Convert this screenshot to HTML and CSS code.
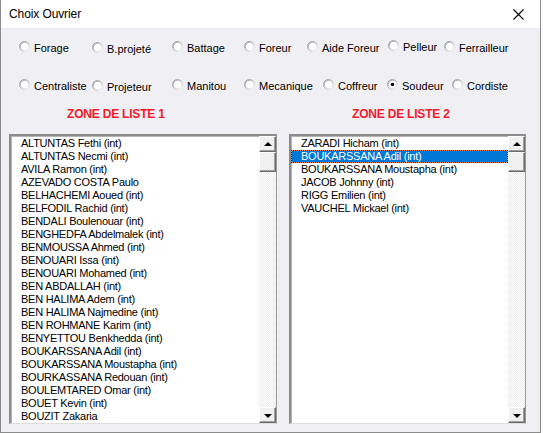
FILE: index.html
```html
<!DOCTYPE html>
<html lang="fr">
<head>
<meta charset="utf-8">
<title>Choix Ouvrier</title>
<link rel="stylesheet" href="styles.css">
</head>
<body>
<svg class="defs" width="0" height="0" aria-hidden="true">
  <defs>
    <linearGradient id="rgo" x1="0" y1="0" x2="1" y2="1">
      <stop offset="0" stop-color="#8e8e8e"/>
      <stop offset="0.5" stop-color="#b4b4b4"/>
      <stop offset="1" stop-color="#ffffff"/>
    </linearGradient>
    <linearGradient id="rgi" x1="0" y1="0" x2="1" y2="1">
      <stop offset="0" stop-color="#6a6a6a"/>
      <stop offset="0.55" stop-color="#d0d0d0"/>
      <stop offset="1" stop-color="#eeeeee"/>
    </linearGradient>
  </defs>
</svg>
<div class="window">
  <div class="titlebar">
    <span class="title">Choix Ouvrier</span>
    <span class="close"><svg width="11" height="11" viewBox="0 0 11 11"><path d="M0.5 0.5 L10.5 10.5 M10.5 0.5 L0.5 10.5" stroke="#000" stroke-width="1.1" fill="none"/></svg></span>
  </div>
  <div class="body">
    <div class="radio-row">
      <label class="radio w73"><svg class="rb" viewBox="0 0 12 12"><circle cx="6" cy="6" r="5.5" fill="#fff" stroke="url(#rgo)"/><circle cx="6" cy="6" r="4.5" fill="#fff" stroke="url(#rgi)" stroke-width="0.8"/></svg>Forage</label>
      <label class="radio w80 low"><svg class="rb" viewBox="0 0 12 12"><circle cx="6" cy="6" r="5.5" fill="#fff" stroke="url(#rgo)"/><circle cx="6" cy="6" r="4.5" fill="#fff" stroke="url(#rgi)" stroke-width="0.8"/></svg>B.projeté</label>
      <label class="radio w72"><svg class="rb" viewBox="0 0 12 12"><circle cx="6" cy="6" r="5.5" fill="#fff" stroke="url(#rgo)"/><circle cx="6" cy="6" r="4.5" fill="#fff" stroke="url(#rgi)" stroke-width="0.8"/></svg>Battage</label>
      <label class="radio w63"><svg class="rb" viewBox="0 0 12 12"><circle cx="6" cy="6" r="5.5" fill="#fff" stroke="url(#rgo)"/><circle cx="6" cy="6" r="4.5" fill="#fff" stroke="url(#rgi)" stroke-width="0.8"/></svg>Foreur</label>
      <label class="radio w81"><svg class="rb" viewBox="0 0 12 12"><circle cx="6" cy="6" r="5.5" fill="#fff" stroke="url(#rgo)"/><circle cx="6" cy="6" r="4.5" fill="#fff" stroke="url(#rgi)" stroke-width="0.8"/></svg>Aide Foreur</label>
      <label class="radio w56 high"><svg class="rb" viewBox="0 0 12 12"><circle cx="6" cy="6" r="5.5" fill="#fff" stroke="url(#rgo)"/><circle cx="6" cy="6" r="4.5" fill="#fff" stroke="url(#rgi)" stroke-width="0.8"/></svg>Pelleur</label>
      <label class="radio"><svg class="rb" viewBox="0 0 12 12"><circle cx="6" cy="6" r="5.5" fill="#fff" stroke="url(#rgo)"/><circle cx="6" cy="6" r="4.5" fill="#fff" stroke="url(#rgi)" stroke-width="0.8"/></svg>Ferrailleur</label>
    </div>
    <div class="radio-row row2">
      <label class="radio w73"><svg class="rb" viewBox="0 0 12 12"><circle cx="6" cy="6" r="5.5" fill="#fff" stroke="url(#rgo)"/><circle cx="6" cy="6" r="4.5" fill="#fff" stroke="url(#rgi)" stroke-width="0.8"/></svg>Centraliste</label>
      <label class="radio w80 low"><svg class="rb" viewBox="0 0 12 12"><circle cx="6" cy="6" r="5.5" fill="#fff" stroke="url(#rgo)"/><circle cx="6" cy="6" r="4.5" fill="#fff" stroke="url(#rgi)" stroke-width="0.8"/></svg>Projeteur</label>
      <label class="radio w72"><svg class="rb" viewBox="0 0 12 12"><circle cx="6" cy="6" r="5.5" fill="#fff" stroke="url(#rgo)"/><circle cx="6" cy="6" r="4.5" fill="#fff" stroke="url(#rgi)" stroke-width="0.8"/></svg>Manitou</label>
      <label class="radio w79"><svg class="rb" viewBox="0 0 12 12"><circle cx="6" cy="6" r="5.5" fill="#fff" stroke="url(#rgo)"/><circle cx="6" cy="6" r="4.5" fill="#fff" stroke="url(#rgi)" stroke-width="0.8"/></svg>Mecanique</label>
      <label class="radio w64"><svg class="rb" viewBox="0 0 12 12"><circle cx="6" cy="6" r="5.5" fill="#fff" stroke="url(#rgo)"/><circle cx="6" cy="6" r="4.5" fill="#fff" stroke="url(#rgi)" stroke-width="0.8"/></svg>Coffreur</label>
      <label class="radio w65"><svg class="rb" viewBox="0 0 12 12"><circle cx="6" cy="6" r="5.5" fill="#fff" stroke="url(#rgo)"/><circle cx="6" cy="6" r="4.5" fill="#fff" stroke="url(#rgi)" stroke-width="0.8"/><circle cx="6" cy="6" r="1.9" fill="#000"/></svg>Soudeur</label>
      <label class="radio"><svg class="rb" viewBox="0 0 12 12"><circle cx="6" cy="6" r="5.5" fill="#fff" stroke="url(#rgo)"/><circle cx="6" cy="6" r="4.5" fill="#fff" stroke="url(#rgi)" stroke-width="0.8"/></svg>Cordiste</label>
    </div>

    <div class="zones">
      <div class="zone zone1">
        <div class="zone-title">ZONE DE LISTE 1</div>
        <div class="listbox">
          <ul class="items">
            <li>ALTUNTAS Fethi (int)</li>
            <li>ALTUNTAS Necmi (int)</li>
            <li>AVILA Ramon (int)</li>
            <li>AZEVADO COSTA Paulo</li>
            <li>BELHACHEMI Aoued (int)</li>
            <li>BELFODIL Rachid (int)</li>
            <li>BENDALI Boulenouar (int)</li>
            <li>BENGHEDFA Abdelmalek (int)</li>
            <li>BENMOUSSA Ahmed (int)</li>
            <li>BENOUARI Issa (int)</li>
            <li>BENOUARI Mohamed (int)</li>
            <li>BEN ABDALLAH (int)</li>
            <li>BEN HALIMA Adem (int)</li>
            <li>BEN HALIMA Najmedine (int)</li>
            <li>BEN ROHMANE Karim (int)</li>
            <li>BENYETTOU Benkhedda (int)</li>
            <li>BOUKARSSANA Adil (int)</li>
            <li>BOUKARSSANA Moustapha (int)</li>
            <li>BOURKASSANA Redouan (int)</li>
            <li>BOULEMTARED Omar (int)</li>
            <li>BOUET Kevin (int)</li>
            <li>BOUZIT Zakaria</li>
          </ul>
          <div class="scrollbar">
            <div class="sbtn"><span class="arrow-up"></span></div>
            <div class="thumb"></div>
            <div class="track"></div>
            <div class="sbtn"><span class="arrow-down"></span></div>
          </div>
        </div>
      </div>
      <div class="zone zone2">
        <div class="zone-title">ZONE DE LISTE 2</div>
        <div class="listbox">
          <ul class="items">
            <li>ZARADI Hicham (int)</li>
            <li class="selected">BOUKARSSANA Adil (int)</li>
            <li>BOUKARSSANA Moustapha (int)</li>
            <li>JACOB Johnny (int)</li>
            <li>RIGG Emilien (int)</li>
            <li>VAUCHEL Mickael (int)</li>
          </ul>
          <div class="scrollbar">
            <div class="sbtn"><span class="arrow-up"></span></div>
            <div class="thumb"></div>
            <div class="track"></div>
            <div class="sbtn"><span class="arrow-down"></span></div>
          </div>
        </div>
      </div>
    </div>
  </div>
</div>
</body>
</html>
```
FILE: styles.css
```css
* { box-sizing: border-box; }

html, body {
  margin: 0;
  padding: 0;
  background: #ffffff;
}

.defs { position: absolute; width: 0; height: 0; }

.window {
  width: 541px;
  height: 433px;
  border: 1px solid #8a8a8a;
  border-top: none;
  background: #f0eff3;
  display: flex;
  flex-direction: column;
  font-family: "Liberation Sans", Arial, sans-serif;
  font-size: 11px;
  color: #000;
}

.titlebar {
  height: 29px;
  flex: 0 0 29px;
  background: #ffffff;
  border-bottom: 1px solid #ececec;
  display: flex;
  align-items: center;
  justify-content: space-between;
  padding-left: 8px;
  padding-right: 16px;
}

.title {
  font-family: "Liberation Sans", Arial, sans-serif;
  font-size: 12px;
  color: #000;
  margin-top: -1px;
  letter-spacing: -0.1px;
}

.close {
  display: flex;
  align-items: center;
}

.body {
  flex: 1;
  display: flex;
  flex-direction: column;
  padding: 11px 0 0 18px;
}

.radio-row {
  display: flex;
  align-items: center;
  height: 16px;
}

.row2 { margin-top: 22px; }

.radio {
  display: flex;
  align-items: center;
  gap: 4px;
  white-space: nowrap;
  line-height: 14px;
}

.radio .rb {
  width: 11px;
  height: 11px;
  flex: 0 0 11px;
  margin-top: -3px;
}

.low { position: relative; top: 1px; }
.high { position: relative; top: -1px; }

.w56 { width: 56px; }
.w63 { width: 63px; }
.w64 { width: 64px; }
.w65 { width: 65px; }
.w72 { width: 72px; }
.w73 { width: 73px; }
.w79 { width: 79px; }
.w80 { width: 80px; }
.w81 { width: 81px; }

.zones {
  display: flex;
  margin-top: 13px;
  margin-left: -10px;
  gap: 12px;
}

.zone {
  display: flex;
  flex-direction: column;
}

.zone-title {
  color: #f41a2c;
  font-weight: bold;
  font-size: 12px;
  line-height: 14px;
  height: 14px;
  margin-bottom: 13px;
  white-space: nowrap;
  letter-spacing: -0.2px;
}

.zone1 .zone-title { margin-left: 58px; }
.zone2 .zone-title { margin-left: 63px; }

.listbox {
  display: flex;
  height: 290px;
  background: #ffffff;
  border-top: 2px solid #8c8c8c;
  border-left: 2px solid #8c8c8c;
  border-right: 1px solid #9a9a9a;
  border-bottom: 1px solid #dedede;
  box-shadow: inset 1px 1px 0 #b5b5b5;
}

.zone1 .listbox { width: 268px; }
.zone2 .listbox { width: 237px; }

.items {
  list-style: none;
  margin: 0;
  padding: 1px 0 0 0;
  flex: 1;
  overflow: hidden;
}

.items li {
  height: 13px;
  line-height: 13px;
  padding-left: 10px;
  white-space: nowrap;
  letter-spacing: -0.25px;
}

.items li.selected {
  color: #ffffff;
  padding-left: 9px;
  border: 1px dotted #1a1a1a;
  line-height: 11px;
  background: linear-gradient(#0078d7, #0078d7) padding-box, #f08a24 border-box;
}

.scrollbar {
  width: 17px;
  flex: 0 0 17px;
  display: flex;
  flex-direction: column;
  background: repeating-conic-gradient(#ffffff 0 25%, #ececec 0 50%) 0 0 / 2px 2px;
}

.sbtn, .thumb {
  background: #f0f0f0;
  border-top: 1px solid #ffffff;
  border-left: 1px solid #ffffff;
  border-right: 1px solid #6a6a6a;
  border-bottom: 1px solid #6a6a6a;
  box-shadow: inset -1px -1px 0 #a0a0a0;
}

.sbtn {
  height: 16px;
  flex: 0 0 16px;
  display: flex;
  align-items: center;
  justify-content: center;
}

.thumb {
  height: 20px;
  flex: 0 0 20px;
}

.track { flex: 1; }

.arrow-up {
  width: 0;
  height: 0;
  border-left: 4px solid transparent;
  border-right: 4px solid transparent;
  border-bottom: 4px solid #000;
  margin-top: -1px;
}

.arrow-down {
  width: 0;
  height: 0;
  border-left: 4px solid transparent;
  border-right: 4px solid transparent;
  border-top: 4px solid #000;
  margin-top: 1px;
}
```
